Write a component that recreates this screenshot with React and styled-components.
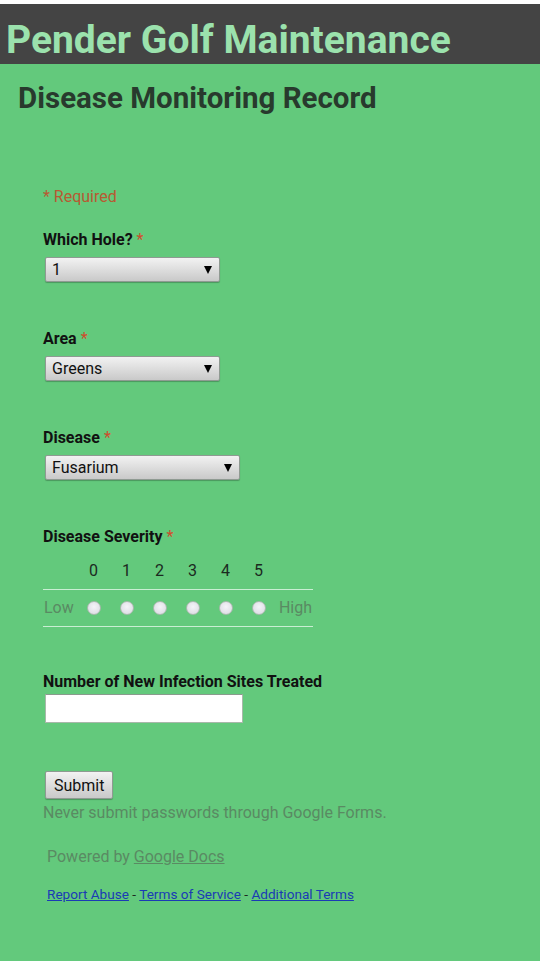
import React from 'react';
import styled, { createGlobalStyle } from 'styled-components';

const GlobalStyle = createGlobalStyle`
  html, body {
    margin: 0;
    padding: 0;
    background-color: #63c97c;
    font-family: Roboto, "Liberation Sans", Arial, sans-serif;
  }
`;

const SEVERITY = [0, 1, 2, 3, 4, 5];

const App = () => (
  <PageWrapper>
    <GlobalStyle />
    <HeaderBar>
      <HeaderTitle>Pender Golf Maintenance</HeaderTitle>
    </HeaderBar>
    <FormTitle>Disease Monitoring Record</FormTitle>
    <FormBody>
      <RequiredNote>* Required</RequiredNote>

      <Question>
        <QuestionLabel>
          Which Hole? <Star>*</Star>
        </QuestionLabel>
        <SelectWrapper width={175}>
          <Select defaultValue="1">
            <option>1</option>
          </Select>
        </SelectWrapper>
      </Question>

      <Question>
        <QuestionLabel>
          Area <Star>*</Star>
        </QuestionLabel>
        <SelectWrapper width={175}>
          <Select defaultValue="Greens">
            <option>Greens</option>
          </Select>
        </SelectWrapper>
      </Question>

      <Question>
        <QuestionLabel>
          Disease <Star>*</Star>
        </QuestionLabel>
        <SelectWrapper width={195}>
          <Select defaultValue="Fusarium">
            <option>Fusarium</option>
          </Select>
        </SelectWrapper>
      </Question>

      <Question spacing={45}>
        <QuestionLabel>
          Disease Severity <Star>*</Star>
        </QuestionLabel>
        <ScaleGrid>
          <ScaleCell />
          {SEVERITY.map((n) => (
            <ScaleNumber key={n}>{n}</ScaleNumber>
          ))}
          <ScaleCell />
          <ScaleSide align="left">Low</ScaleSide>
          {SEVERITY.map((n) => (
            <RadioCell key={n}>
              <Radio />
            </RadioCell>
          ))}
          <ScaleSide align="right">High</ScaleSide>
        </ScaleGrid>
      </Question>

      <Question spacing={48}>
        <QuestionLabel>Number of New Infection Sites Treated</QuestionLabel>
        <TextInput type="text" />
      </Question>

      <SubmitButton type="button">Submit</SubmitButton>
      <Disclaimer>Never submit passwords through Google Forms.</Disclaimer>
      <PoweredBy>
        Powered by <GreyLink href="#">Google Docs</GreyLink>
      </PoweredBy>
      <FooterLinks>
        <BlueLink href="#">Report Abuse</BlueLink>
        {' - '}
        <BlueLink href="#">Terms of Service</BlueLink>
        {' - '}
        <BlueLink href="#">Additional Terms</BlueLink>
      </FooterLinks>
    </FormBody>
  </PageWrapper>
);

const PageWrapper = styled.div`
  border-top: 4px solid #ffffff;
  min-height: 957px;
`;

const HeaderBar = styled.div`
  background-color: #444444;
  height: 60px;
  display: flex;
  align-items: center;
  padding-left: 6px;
`;

const HeaderTitle = styled.div`
  color: #9be2ad;
  font-size: 39px;
  font-weight: 700;
  line-height: 1;
  padding-top: 12px;
`;

const FormTitle = styled.div`
  color: #283a2d;
  font-size: 29.5px;
  font-weight: 700;
  margin: 17px 0 0 18px;
  line-height: 34px;
`;

const FormBody = styled.div`
  padding: 72px 0 40px 43px;
`;

const RequiredNote = styled.div`
  color: #b85a32;
  font-size: 16px;
  line-height: 20px;
  margin-bottom: 23px;
`;

const Question = styled.div`
  margin-bottom: ${({ spacing }) => spacing || 47}px;
`;

const QuestionLabel = styled.div`
  color: #111;
  font-size: 16px;
  font-weight: 700;
  line-height: 19px;
`;

const Star = styled.span`
  color: #cf4c2c;
  font-weight: 400;
`;

const SelectWrapper = styled.div`
  position: relative;
  width: ${({ width }) => width}px;
  margin: 8px 0 0 2px;
  &::after {
    content: '';
    position: absolute;
    right: 8px;
    top: 9px;
    border-left: 4px solid transparent;
    border-right: 4px solid transparent;
    border-top: 8px solid #000;
    pointer-events: none;
  }
`;

const Select = styled.select`
  appearance: none;
  width: 100%;
  height: 25px;
  padding: 0 6px;
  font-family: Roboto, "Liberation Sans", Arial, sans-serif;
  font-size: 16px;
  color: #111;
  border: 1px solid #8f9a92;
  border-radius: 2px;
  background: linear-gradient(#f2f2f2, #c9c9c9);
  box-shadow: 0 1px 1px rgba(0, 0, 0, 0.25);
`;

const ScaleGrid = styled.div`
  display: grid;
  grid-template-columns: 34px repeat(6, 33px) 38px;
  width: 270px;
  margin-top: 7px;
`;

const ScaleCell = styled.div`
  border-bottom: 1px solid #c9eed3;
`;

const ScaleNumber = styled.div`
  text-align: center;
  color: #1b2a1f;
  font-size: 16px;
  line-height: 36px;
  border-bottom: 1px solid #c9eed3;
`;

const ScaleSide = styled.div`
  color: #5a8a63;
  font-size: 16px;
  line-height: 36px;
  text-align: ${({ align }) => align};
  padding: ${({ align }) => (align === 'left' ? '0 0 0 1px' : '0 1px 0 0')};
  border-bottom: 1px solid #c9eed3;
`;

const RadioCell = styled.div`
  display: flex;
  align-items: center;
  justify-content: center;
  border-bottom: 1px solid #c9eed3;
`;

const Radio = styled.span`
  width: 12px;
  height: 12px;
  border-radius: 50%;
  background: radial-gradient(circle at 50% 40%, #f4f4f8, #d8d8e0);
  border: 1px solid #a9b9ad;
`;

const TextInput = styled.input`
  display: block;
  box-sizing: border-box;
  width: 198px;
  height: 29px;
  margin: 3px 0 0 2px;
  border: 1px solid #a8b8aa;
  border-top-color: #8a9a8d;
  background: #fff;
  padding: 2px 4px;
`;

const SubmitButton = styled.button`
  display: block;
  margin: 0 0 4px 2px;
  height: 28px;
  padding: 0 8px;
  font-family: Roboto, "Liberation Sans", Arial, sans-serif;
  font-size: 16px;
  color: #111;
  border: 1px solid #8f9a92;
  border-radius: 2px;
  background: linear-gradient(#f2f2f2, #c9c9c9);
  box-shadow: 0 1px 1px rgba(0, 0, 0, 0.25);
`;

const Disclaimer = styled.div`
  color: #5a8a63;
  font-size: 16px;
  line-height: 20px;
`;

const PoweredBy = styled.div`
  color: #5a8a63;
  font-size: 16px;
  line-height: 20px;
  margin: 24px 0 0 4px;
`;

const GreyLink = styled.a`
  color: #5a8a63;
  text-decoration: underline;
`;

const FooterLinks = styled.div`
  color: #1b2a1f;
  font-size: 13.6px;
  line-height: 16px;
  margin: 19px 0 0 4px;
`;

const BlueLink = styled.a`
  color: #1a3bb5;
  text-decoration: underline;
`;

export default App;
